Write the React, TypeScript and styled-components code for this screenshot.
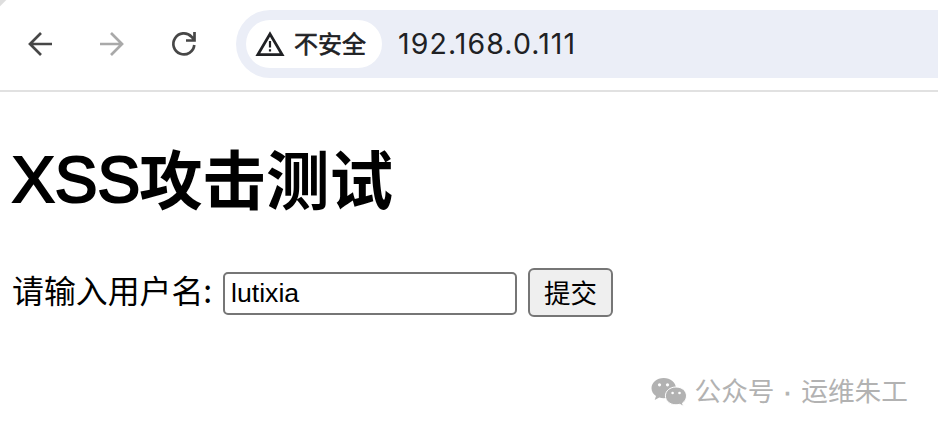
import React, { useState } from "react";
import styled, { createGlobalStyle } from "styled-components";

const GlobalStyle = createGlobalStyle`
  * { box-sizing: border-box; }
  body {
    margin: 0;
    background: #fff;
    overflow: hidden;
    font-family: "Liberation Sans", "Noto Sans CJK SC", sans-serif;
  }
`;

const Window = styled.div`
  display: flex;
  flex-direction: column;
  width: 938px;
  height: 430px;
  background: linear-gradient(135deg, #dedede 4px, #fff 5px);
  overflow: hidden;
`;

const Toolbar = styled.header`
  display: flex;
  flex: none;
  align-items: flex-start;
  height: 92px;
  padding: 10px 0 0 24px;
  border-bottom: 2px solid #e1e1e1;
`;

const NavButtons = styled.nav`
  display: flex;
  gap: 40px;
  padding-top: 18px;
  width: 212px;
`;

const NavButton = styled.button<{ $muted?: boolean }>`
  width: 32px;
  height: 32px;
  padding: 0;
  border: 0;
  background: none;
  color: ${(p) => (p.$muted ? "#a9a9a9" : "#474747")};
  svg { display: block; }
`;

const AddressBar = styled.div`
  display: flex;
  flex: 1;
  align-items: center;
  height: 68px;
  padding-left: 10px;
  border-radius: 34px 0 0 34px;
  background: #ebeef7;
`;

const SecurityChip = styled.div`
  display: flex;
  align-items: center;
  gap: 9px;
  width: 136px;
  height: 48px;
  padding-left: 9px;
  border-radius: 24px;
  background: #fff;
  color: #202124;
  font: 400 24px/46px "Noto Sans CJK SC", sans-serif;
  white-space: nowrap;
  -webkit-text-stroke: 0.6px #202124;
  svg { flex: none; }
`;

const ChipText = styled.span`
  height: 48px;
`;

const Address = styled.span`
  margin-left: 16px;
  color: #202124;
  font: 400 28.5px/68px Inter, sans-serif;
  letter-spacing: 1.1px;
`;

const Content = styled.main`
  display: flex;
  flex: 1;
  flex-direction: column;
  padding: 47px 30px 0 12px;
`;

const Title = styled.h1`
  display: flex;
  margin: 0;
  height: 84px;
  color: #000;
  font-size: 63.5px;
  font-weight: 700;
  line-height: 84px;
  white-space: nowrap;
`;

const Latin = styled.span`
  height: 82px;
  line-height: 82px;
  font-size: 64px;
  font-weight: 400;
  -webkit-text-stroke: 2.2px #000;
`;

const Han = styled.span`
  height: 84px;
  margin-left: -1px;
  line-height: 74px;
  font-family: "Noto Sans CJK SC", sans-serif;
`;

const Form = styled.form`
  display: flex;
  align-items: center;
  height: 50px;
  margin-top: 44px;
`;

const Label = styled.label`
  width: 211px;
  height: 50px;
  color: #000;
  font: 400 31.9px/44px "Noto Sans CJK SC", sans-serif;
  white-space: nowrap;
`;

const NameInput = styled.input`
  width: 294px;
  height: 43px;
  margin-top: 2px;
  padding: 0 6px;
  border: 2px solid #767676;
  border-radius: 5px;
  background: #fff;
  color: #000;
  font: 400 26.67px/38px "Liberation Sans", sans-serif;
  outline: 0;
`;

const Submit = styled.button`
  width: 85px;
  height: 49px;
  margin-left: 11px;
  padding: 0;
  border: 2px solid #767676;
  border-radius: 6px;
  background: #efefef;
  color: #000;
  font: 400 26.5px/44px "Noto Sans CJK SC", sans-serif;
`;

const Watermark = styled.footer`
  display: flex;
  align-items: center;
  align-self: flex-end;
  gap: 7px;
  margin-top: 55px;
  height: 40px;
  color: #b2b2b2;
  font: 400 26.7px/36px "Liberation Sans", "Noto Sans CJK SC", sans-serif;
  white-space: pre;
`;

const Dot = styled.span`
  letter-spacing: 1px;
  -webkit-text-stroke: 0.8px #b2b2b2;
`;

const stroke = { fill: "none", stroke: "currentColor", strokeWidth: 2.7 };

const BackIcon = () => (
  <svg width="32" height="32" viewBox="0 0 32 32" {...stroke}>
    <path d="M28 16H6M17 5 6 16l11 11" />
  </svg>
);

const ForwardIcon = () => (
  <svg width="32" height="32" viewBox="0 0 32 32" {...stroke}>
    <path d="M4 16h22M15 5l11 11-11 11" />
  </svg>
);

const ReloadIcon = () => (
  <svg width="32" height="32" viewBox="0 0 32 32" {...stroke}>
    <path d="M26.3 17A10.5 10.5 0 1 1 23.5 8.7L26 11.5M26.5 4v8.5H18" />
  </svg>
);

const WarningIcon = () => (
  <svg width="30" height="26" viewBox="0 0 30 26">
    <path d="M15 3 27.2 23.7H2.8Z" fill="none" stroke="currentColor" strokeWidth="2.7" />
    <path d="M15 10v6.5M15 18.2v2.4" stroke="currentColor" strokeWidth="2.2" />
  </svg>
);

const ChatIcon = () => (
  <svg width="36" height="30" viewBox="0 0 36 30" fill="#b2b2b2">
    <path d="M12.7 1C5.8 1 .5 5.5.5 11.2c0 3.3 1.8 6 4.5 7.9L3.7 23l4.6-2.4c1.4.4 2.8.6 4.4.6C19.5 21.2 25 16.8 25 11.2S19.5 1 12.7 1Z" />
    <path
      d="M25 10c-6 0-10.6 3.9-10.6 8.900S19 27.800 25 27.800c1.300 0 2.500-.2 3.700-.5l3.800 2-1-3.300c2.500-1.700 4-4.200 4-7.100 0-5-4.600-8.900-10.500-8.900Z"
      stroke="#fff"
      strokeWidth="1"
    />
    <g fill="#fff">
      <circle cx="8.5" cy="7.8" r="1.6" />
      <circle cx="16.5" cy="7.8" r="1.6" />
      <circle cx="21.6" cy="16" r="1.3" />
      <circle cx="28.5" cy="16" r="1.3" />
    </g>
  </svg>
);

export default function App() {
  const [name, setName] = useState("lutixia");
  return (
    <Window>
      <GlobalStyle />
      <Toolbar>
        <NavButtons>
          <NavButton aria-label="后退"><BackIcon /></NavButton>
          <NavButton aria-label="前进" $muted><ForwardIcon /></NavButton>
          <NavButton aria-label="重新加载"><ReloadIcon /></NavButton>
        </NavButtons>
        <AddressBar>
          <SecurityChip><WarningIcon /><ChipText>不安全</ChipText></SecurityChip>
          <Address>192.168.0.111</Address>
        </AddressBar>
      </Toolbar>
      <Content>
        <Title><Latin>XSS</Latin><Han>攻击测试</Han></Title>
        <Form onSubmit={(e) => e.preventDefault()}>
          <Label htmlFor="name">请输入用户名:</Label>
          <NameInput id="name" value={name} onChange={(e) => setName(e.target.value)} />
          <Submit>提交</Submit>
        </Form>
        <Watermark><ChatIcon /><span>公众号<Dot> · </Dot>运维朱工</span></Watermark>
      </Content>
    </Window>
  );
}
